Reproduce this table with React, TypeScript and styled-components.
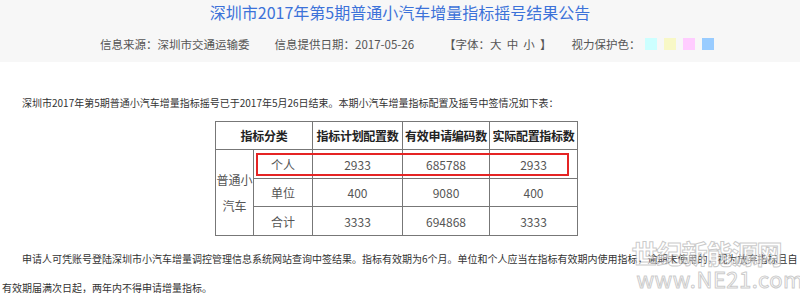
import React from "react";
import styled, { createGlobalStyle } from "styled-components";

const Global = createGlobalStyle`
  html, body { margin: 0; padding: 0; background: #fff; }
  body { font-family: "Noto Sans CJK SC", "Noto Sans", sans-serif; overflow: hidden; }
`;

const Page = styled.div`
  width: 800px;
  height: 293px;
  position: relative;
  overflow: hidden;
`;

const Header = styled.header`
  background: #f7f7f7;
  height: 62px;
  display: flex;
  flex-direction: column;
`;

const Title = styled.h1`
  margin: 2px 0 0;
  text-align: center;
  font-size: 16px;
  line-height: 20px;
  font-weight: 400;
  color: #3c72d9;
`;

const InfoRow = styled.div`
  margin-top: 14px;
  padding-left: 100px;
  display: flex;
  align-items: center;
  height: 16px;
  font-size: 11.5px;
  color: #555;
  white-space: nowrap;
`;

const InfoItem = styled.span<{ $gap: number }>`
  margin-left: ${(p) => p.$gap}px;
`;

const Swatches = styled.span`
  display: inline-flex;
  gap: 7px;
  margin-left: 4px;
`;

const Swatch = styled.span<{ $c: string }>`
  display: inline-block;
  width: 12px;
  height: 12px;
  background: ${(p) => p.$c};
`;

const Content = styled.main`
  padding: 31px 0 0 2px;
  font-size: 10px;
  color: #333;
`;

const Para = styled.p<{ $lh: number }>`
  margin: 0;
  text-indent: 20px;
  line-height: ${(p) => p.$lh}px;
`;

const TableWrap = styled.div`
  position: relative;
  margin: 8px 0 0 213px;
  width: 363px;
`;

const Table = styled.table`
  border-collapse: collapse;
  table-layout: fixed;
  width: 363px;
  font-size: 12px;
  font-family: "Noto Sans CJK SC", sans-serif;
`;

const Th = styled.th`
  border: 1px solid #777;
  height: 27px;
  padding: 0;
  font-weight: bold;
  color: #222;
  white-space: nowrap;
  text-align: center;
  letter-spacing: -0.3px;
`;

const Td = styled.td<{ $h: number }>`
  border: 1px solid #777;
  height: ${(p) => p.$h}px;
  padding: 0;
  color: #555;
  text-align: center;
`;

const MergedCell = styled.td`
  border: 1px solid #777;
  padding: 0;
  color: #555;
  text-align: center;
  line-height: 26px;
  word-break: break-all;
`;

const Highlight = styled.div`
  position: absolute;
  left: 41px;
  top: 32px;
  width: 313px;
  height: 23px;
  border: 2px solid #e52424;
  box-sizing: border-box;
  pointer-events: none;
`;

const Para2 = styled(Para)`
  margin-top: 8px;
`;

const Watermark = styled.div`
  position: absolute;
  right: -4px;
  bottom: 4px;
  display: flex;
  flex-direction: column;
  align-items: flex-start;
  color: rgba(255, 255, 255, 0.55);
  -webkit-text-stroke: 1px rgba(150, 150, 150, 0.5);
  font-family: "Noto Sans CJK SC", sans-serif;
  pointer-events: none;
`;

const WmTop = styled.span`
  font-size: 26px;
  line-height: 28px;
  font-weight: bold;
  letter-spacing: -1px;
`;

const WmBottom = styled.span`
  font-size: 22px;
  line-height: 22px;
  margin-left: 5px;
  letter-spacing: 0.5px;
`;

const rows = [
  { name: "个人", a: "2933", b: "685788", c: "2933", h: 28 },
  { name: "单位", a: "400", b: "9080", c: "400", h: 27 },
  { name: "合计", a: "3333", b: "694868", c: "3333", h: 28 },
];

const swatches = ["#ccffff", "#f8f8c6", "#ffccff", "#99ccff"];

export default function App() {
  return (
    <Page>
      <Global />
      <Header>
        <Title>深圳市2017年第5期普通小汽车增量指标摇号结果公告</Title>
        <InfoRow>
          <InfoItem $gap={0}>信息来源：深圳市交通运输委</InfoItem>
          <InfoItem $gap={25}>信息提供日期：2017-05-26</InfoItem>
          <InfoItem $gap={30}>【字体：大&nbsp;&nbsp;中&nbsp;&nbsp;小&nbsp;&nbsp;】</InfoItem>
          <InfoItem $gap={20}>视力保护色：</InfoItem>
          <Swatches>
            {swatches.map((c) => (
              <Swatch key={c} $c={c} />
            ))}
          </Swatches>
        </InfoRow>
      </Header>
      <Content>
        <Para $lh={20}>
          深圳市2017年第5期普通小汽车增量指标摇号已于2017年5月26日结束。本期小汽车增量指标配置及摇号中签情况如下表：
        </Para>
        <TableWrap>
          <Table>
            <colgroup>
              <col style={{ width: 38 }} />
              <col style={{ width: 59 }} />
              <col style={{ width: 90 }} />
              <col style={{ width: 87 }} />
              <col style={{ width: 88 }} />
            </colgroup>
            <thead>
              <tr>
                <Th colSpan={2}>指标分类</Th>
                <Th>指标计划配置数</Th>
                <Th>有效申请编码数</Th>
                <Th>实际配置指标数</Th>
              </tr>
            </thead>
            <tbody>
              {rows.map((r, i) => (
                <tr key={r.name}>
                  {i === 0 && <MergedCell rowSpan={3}>普通小汽车</MergedCell>}
                  <Td $h={r.h}>{r.name}</Td>
                  <Td $h={r.h}>{r.a}</Td>
                  <Td $h={r.h}>{r.b}</Td>
                  <Td $h={r.h}>{r.c}</Td>
                </tr>
              ))}
            </tbody>
          </Table>
          <Highlight />
        </TableWrap>
        <Para2 $lh={29}>
          申请人可凭账号登陆深圳市小汽车增量调控管理信息系统网站查询中签结果。指标有效期为6个月。单位和个人应当在指标有效期内使用指标，逾期未使用的，视为放弃指标且自有效期届满次日起，两年内不得申请增量指标。
        </Para2>
      </Content>
      <Watermark>
        <WmTop>世纪新能源网</WmTop>
        <WmBottom>www.NE21.com</WmBottom>
      </Watermark>
    </Page>
  );
}
